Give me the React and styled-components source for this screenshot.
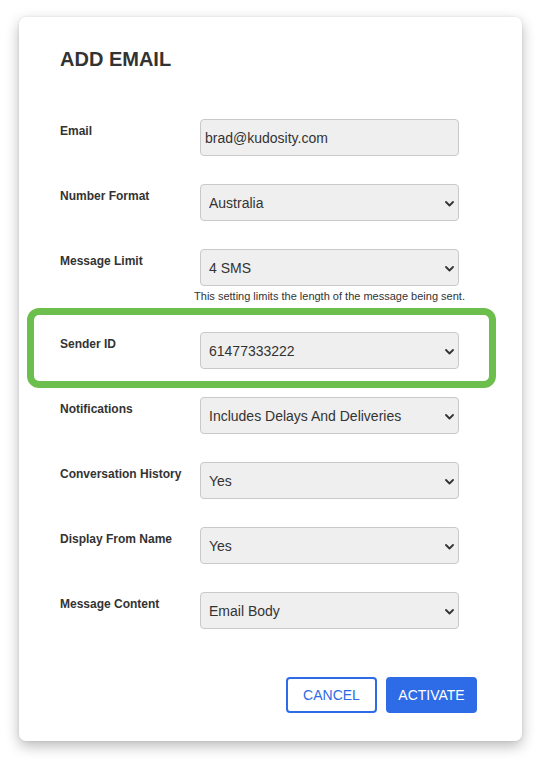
import React from "react";
import styled, { createGlobalStyle } from "styled-components";

const GlobalStyle = createGlobalStyle`
  html, body { margin: 0; padding: 0; background: #ffffff; }
  body { font-family: "Liberation Sans", Arial, sans-serif; color: #333; }
  * { box-sizing: border-box; }
`;

const Page = styled.div`
  padding: 17px 0 31px 19px;
`;

const Card = styled.div`
  width: 503px;
  background: #fff;
  border-radius: 7px;
  box-shadow: 0 5px 14px rgba(0, 0, 0, 0.28), 0 0 3px rgba(0, 0, 0, 0.08);
  padding: 30px 45px 28px 41px;
`;

const Title = styled.h1`
  margin: 0 0 48px;
  font-size: 20px;
  line-height: 24px;
  font-weight: 700;
  color: #333;
`;

const Form = styled.div`
  display: flex;
  flex-direction: column;
`;

const Row = styled.div`
  display: flex;
  align-items: flex-start;
  margin-top: ${(p) => p.$mt ?? 28}px;
`;

const Label = styled.label`
  width: 140px;
  flex: none;
  padding-top: 5px;
  font-size: 12px;
  line-height: 14px;
  font-weight: 700;
  color: #333;
`;

const Control = styled.div`
  width: 259px;
  flex: none;
  position: relative;
`;

const fieldBase = `
  display: block;
  width: 100%;
  height: 37px;
  margin: 0;
  background: #efefef;
  border: 1px solid #c9c9c9;
  border-radius: 4px;
  font-family: "Liberation Sans", Arial, sans-serif;
  font-size: 14px;
  color: #333;
  outline: none;
`;

const TextInput = styled.input`
  ${fieldBase}
  padding: 0 4px;
`;

const Select = styled.select`
  ${fieldBase}
  appearance: none;
  -webkit-appearance: none;
  padding: 0 24px 0 8px;
`;

const Chevron = styled.svg`
  position: absolute;
  right: 5px;
  top: 50%;
  width: 9px;
  height: 6px;
  margin-top: -2px;
  pointer-events: none;
`;

const Helper = styled.div`
  margin: 4px 0 0 140px;
  width: 259px;
  display: flex;
  justify-content: center;
  font-size: 11px;
  line-height: 13px;
  color: #333;
  white-space: nowrap;
`;

const Highlight = styled.div`
  margin: 5px -19px 0 -33px;
  border: 7px solid #6cbf4c;
  border-radius: 12px;
  padding: 17px 12px 12px 26px;
`;

const Actions = styled.div`
  display: flex;
  justify-content: flex-end;
  gap: 9px;
  margin-top: 48px;
`;

const Button = styled.button`
  width: 91px;
  height: 36px;
  border-radius: 4px;
  font-family: "Liberation Sans", Arial, sans-serif;
  font-size: 14px;
  cursor: pointer;
  border: 2px solid #2e6be6;
  background: ${(p) => (p.$primary ? "#2e6be6" : "#fff")};
  color: ${(p) => (p.$primary ? "#fff" : "#2e6be6")};
  padding: 0;
`;

const ChevronIcon = () => (
  <Chevron viewBox="0 0 9 6">
    <path d="M1 1 L4.5 4.5 L8 1" fill="none" stroke="#333" strokeWidth="1.8" strokeLinecap="round" strokeLinejoin="round" />
  </Chevron>
);

const SelectField = ({ value }) => (
  <Control>
    <Select defaultValue={value}>
      <option>{value}</option>
    </Select>
    <ChevronIcon />
  </Control>
);

export default function App() {
  return (
    <>
      <GlobalStyle />
      <Page>
        <Card>
          <Title>ADD EMAIL</Title>
          <Form>
            <Row $mt={0}>
              <Label>Email</Label>
              <Control>
                <TextInput defaultValue="brad@kudosity.com" />
              </Control>
            </Row>
            <Row>
              <Label>Number Format</Label>
              <SelectField value="Australia" />
            </Row>
            <Row>
              <Label>Message Limit</Label>
              <SelectField value="4 SMS" />
            </Row>
            <Helper>
              <span>This setting limits the length of the message being sent.</span>
            </Helper>
            <Highlight>
              <Row $mt={0}>
                <Label>Sender ID</Label>
                <SelectField value="61477333222" />
              </Row>
            </Highlight>
            <Row $mt={9}>
              <Label>Notifications</Label>
              <SelectField value="Includes Delays And Deliveries" />
            </Row>
            <Row>
              <Label>Conversation History</Label>
              <SelectField value="Yes" />
            </Row>
            <Row>
              <Label>Display From Name</Label>
              <SelectField value="Yes" />
            </Row>
            <Row>
              <Label>Message Content</Label>
              <SelectField value="Email Body" />
            </Row>
          </Form>
          <Actions>
            <Button>CANCEL</Button>
            <Button $primary>ACTIVATE</Button>
          </Actions>
        </Card>
      </Page>
    </>
  );
}
